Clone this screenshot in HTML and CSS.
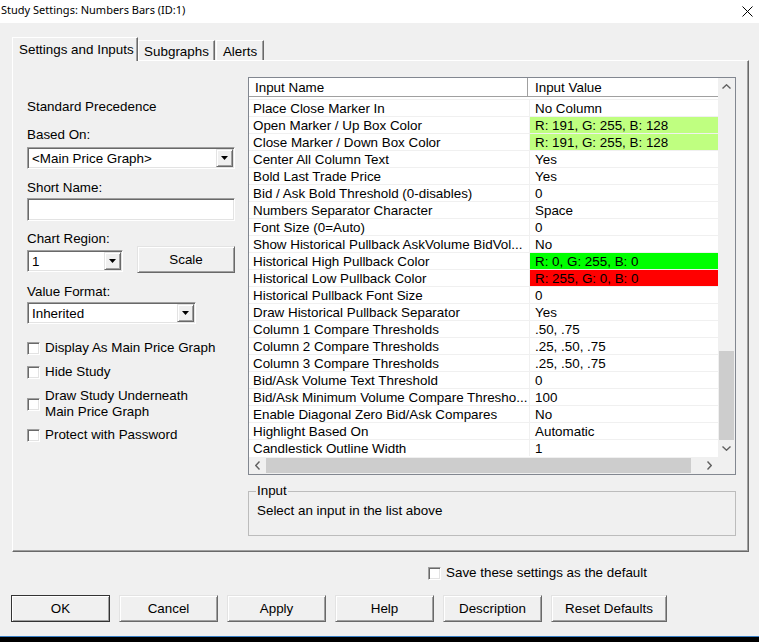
FILE: index.html
```html
<!DOCTYPE html>
<html>
<head>
<meta charset="utf-8">
<title>Study Settings: Numbers Bars (ID:1)</title>
<link rel="stylesheet" href="styles.css">
</head>
<body>
<div class="window">
  <div class="titlebar">
    <span class="title">Study Settings: Numbers Bars (ID:1)</span>
    <svg class="close" viewBox="0 0 11 11" width="11" height="11"><path d="M0.5 0.5L10.5 10.5M10.5 0.5L0.5 10.5" stroke="#000" stroke-width="1" fill="none"/></svg>
  </div>
  <div class="client">
    <div class="tabs">
      <div class="tab active">Settings and Inputs</div>
      <div class="tab t-sub">Subgraphs</div>
      <div class="tab t-alerts">Alerts</div>
    </div>
    <div class="panel">
      <div class="left">
        <div class="lbl">Standard Precedence</div>
        <div class="lbl m12">Based On:</div>
        <div class="combo w-based m5"><span class="ctext">&lt;Main Price Graph&gt;</span><span class="cbtn"><svg width="7" height="4" viewBox="0 0 7 4"><path d="M0 0H7L3.5 4Z" fill="#000"/></svg></span></div>
        <div class="lbl m10">Short Name:</div>
        <div class="edit m3"></div>
        <div class="lbl m9">Chart Region:</div>
        <div class="region-row">
          <div class="combo w-region"><span class="ctext">1</span><span class="cbtn"><svg width="7" height="4" viewBox="0 0 7 4"><path d="M0 0H7L3.5 4Z" fill="#000"/></svg></span></div>
          <div class="btn scale">Scale</div>
        </div>
        <div class="lbl m10">Value Format:</div>
        <div class="combo w-format m3"><span class="ctext">Inherited</span><span class="cbtn"><svg width="7" height="4" viewBox="0 0 7 4"><path d="M0 0H7L3.5 4Z" fill="#000"/></svg></span></div>
        <div class="checks">
          <div class="check"><span class="cbox"></span><span>Display As Main Price Graph</span></div>
          <div class="check"><span class="cbox"></span><span>Hide Study</span></div>
          <div class="check"><span class="cbox"></span><span>Draw Study Underneath<br>Main Price Graph</span></div>
          <div class="check"><span class="cbox"></span><span>Protect with Password</span></div>
        </div>
      </div>
      <div class="right">
        <div class="list">
          <div class="table">
            <div class="thead">
              <div class="th name">Input Name</div>
              <div class="th value">Input Value</div>
            </div>
            <div class="row"><div class="c name">Place Close Marker In</div><div class="c value">No Column</div></div>
            <div class="row"><div class="c name">Open Marker / Up Box Color</div><div class="c value lime">R: 191, G: 255, B: 128</div></div>
            <div class="row"><div class="c name">Close Marker / Down Box Color</div><div class="c value lime">R: 191, G: 255, B: 128</div></div>
            <div class="row"><div class="c name">Center All Column Text</div><div class="c value">Yes</div></div>
            <div class="row"><div class="c name">Bold Last Trade Price</div><div class="c value">Yes</div></div>
            <div class="row"><div class="c name">Bid / Ask Bold Threshold (0-disables)</div><div class="c value">0</div></div>
            <div class="row"><div class="c name">Numbers Separator Character</div><div class="c value">Space</div></div>
            <div class="row"><div class="c name">Font Size (0=Auto)</div><div class="c value">0</div></div>
            <div class="row"><div class="c name">Show Historical Pullback AskVolume BidVol...</div><div class="c value">No</div></div>
            <div class="row"><div class="c name">Historical High Pullback Color</div><div class="c value green">R: 0, G: 255, B: 0</div></div>
            <div class="row"><div class="c name">Historical Low Pullback Color</div><div class="c value red">R: 255, G: 0, B: 0</div></div>
            <div class="row"><div class="c name">Historical Pullback Font Size</div><div class="c value">0</div></div>
            <div class="row"><div class="c name">Draw Historical Pullback Separator</div><div class="c value">Yes</div></div>
            <div class="row"><div class="c name">Column 1 Compare Thresholds</div><div class="c value">.50, .75</div></div>
            <div class="row"><div class="c name">Column 2 Compare Thresholds</div><div class="c value">.25, .50, .75</div></div>
            <div class="row"><div class="c name">Column 3 Compare Thresholds</div><div class="c value">.25, .50, .75</div></div>
            <div class="row"><div class="c name">Bid/Ask Volume Text Threshold</div><div class="c value">0</div></div>
            <div class="row"><div class="c name">Bid/Ask Minimum Volume Compare Thresho...</div><div class="c value">100</div></div>
            <div class="row"><div class="c name">Enable Diagonal Zero Bid/Ask Compares</div><div class="c value">No</div></div>
            <div class="row"><div class="c name">Highlight Based On</div><div class="c value">Automatic</div></div>
            <div class="row"><div class="c name">Candlestick Outline Width</div><div class="c value">1</div></div>
          </div>
          <div class="vscroll">
            <div class="sbtn"><svg width="9" height="5" viewBox="0 0 9 5"><path d="M0.5 4.5L4.5 0.8L8.5 4.5" stroke="#606060" stroke-width="1.4" fill="none"/></svg></div>
            <div class="vtrack"></div>
            <div class="vthumb"></div>
            <div class="sbtn"><svg width="9" height="5" viewBox="0 0 9 5"><path d="M0.5 0.5L4.5 4.2L8.5 0.5" stroke="#606060" stroke-width="1.4" fill="none"/></svg></div>
          </div>
          <div class="hscroll">
            <div class="sbtn"><svg width="5" height="9" viewBox="0 0 5 9"><path d="M4.5 0.5L0.8 4.5L4.5 8.5" stroke="#606060" stroke-width="1.4" fill="none"/></svg></div>
            <div class="hthumb"></div>
            <div class="htrack"></div>
            <div class="sbtn"><svg width="5" height="9" viewBox="0 0 5 9"><path d="M0.5 0.5L4.2 4.5L0.5 8.5" stroke="#606060" stroke-width="1.4" fill="none"/></svg></div>
          </div>
          <div class="corner"></div>
        </div>
        <fieldset class="group">
          <legend>Input</legend>
          <div class="gtext">Select an input in the list above</div>
        </fieldset>
      </div>
    </div>
    <div class="save"><span class="cbox"></span><span>Save these settings as the default</span></div>
    <div class="buttons">
      <div class="btn dlg default">OK</div>
      <div class="btn dlg">Cancel</div>
      <div class="btn dlg">Apply</div>
      <div class="btn dlg">Help</div>
      <div class="btn dlg">Description</div>
      <div class="btn dlg reset">Reset Defaults</div>
    </div>
  </div>
</div>
</body>
</html>
```
FILE: styles.css
```css
* { box-sizing: border-box; }
html, body { margin: 0; padding: 0; }
body {
  width: 759px;
  height: 642px;
  overflow: hidden;
  background: #000;
  font-family: "Liberation Sans", Arial, sans-serif;
  font-size: 13.4px;
  color: #000;
}
.window { display: flex; flex-direction: column; height: 642px; }

.titlebar {
  height: 23px;
  background: #fff;
  display: flex;
  align-items: flex-start;
  justify-content: space-between;
  padding: 0 6px 0 1px;
}
.title {
  font-family: "Noto Sans", "Liberation Sans", sans-serif;
  font-size: 11px;
  line-height: 20px;
  color: #000;
}
.close { display: block; margin-top: 6px; }

.client {
  height: 614px;
  background: #f0f0f0;
  border-bottom: 1px solid #3a7fc4;
}

.tabs {
  display: flex;
  align-items: flex-end;
  height: 23px;
  margin-top: 14px;
  padding-left: 12px;
  position: relative;
  z-index: 1;
}
.tab {
  height: 20px;
  line-height: 21px;
  background: #f0f0f0;
  border-top: 1px solid #fff;
  border-left: 1px solid #fff;
  border-right: 1px solid #696969;
  box-shadow: inset -1px 0 #a0a0a0;
  text-align: center;
  white-space: nowrap;
}
.tab.active {
  width: 126px;
  height: 24px;
  line-height: 24px;
  margin-bottom: -1px;
  text-align: left;
  padding-left: 6px;
}
.t-sub { width: 77px; }
.t-alerts { width: 48px; margin-left: 1px; }

.panel {
  margin-left: 12px;
  width: 737px;
  height: 492px;
  border: 1px solid;
  border-color: #fff #696969 #696969 #fff;
  box-shadow: inset -1px -1px #a0a0a0;
  display: flex;
}

.left {
  width: 222px;
  padding-left: 14px;
  padding-top: 37px;
  display: flex;
  flex-direction: column;
  align-items: flex-start;
}
.lbl { height: 16px; line-height: 18px; white-space: nowrap; }
.m3 { margin-top: 3px; }
.m5 { margin-top: 5px; }
.m9 { margin-top: 9px; }
.m10 { margin-top: 10px; }
.m12 { margin-top: 12px; }

.combo, .edit {
  height: 22px;
  background: #fff;
  border: 1px solid;
  border-color: #a0a0a0 #fff #fff #a0a0a0;
  box-shadow: inset 1px 1px #696969, inset -1px -1px #e3e3e3;
  display: flex;
  align-items: center;
  justify-content: space-between;
}
.edit { width: 208px; height: 23px; }
.w-based { width: 208px; }
.w-region { width: 96px; margin-top: 4px; }
.w-format { width: 169px; }
.ctext { padding-left: 4px; white-space: nowrap; }
.cbtn {
  width: 17px;
  height: 18px;
  margin-right: 1px;
  background: #f0f0f0;
  border: 1px solid;
  border-color: #e3e3e3 #696969 #696969 #e3e3e3;
  box-shadow: inset 1px 1px #fff, inset -1px -1px #a0a0a0;
  display: flex;
  align-items: center;
  justify-content: center;
}

.region-row { display: flex; align-items: flex-start; height: 27px; }
.btn {
  background: #f0f0f0;
  border: 1px solid;
  border-color: #e3e3e3 #696969 #696969 #e3e3e3;
  box-shadow: inset 1px 1px #fff, inset -1px -1px #a0a0a0;
  display: flex;
  align-items: center;
  justify-content: center;
  white-space: nowrap;
}
.scale { width: 98px; height: 27px; margin-left: 14px; }

.checks {
  margin-top: 16px;
  display: flex;
  flex-direction: column;
  gap: 8px;
}
.check { display: flex; align-items: center; line-height: 16px; }
.check:last-child { margin-top: -1px; }
.cbox {
  width: 13px;
  height: 13px;
  flex: none;
  margin-right: 5px;
  background: #fff;
  border: 1px solid;
  border-color: #a0a0a0 #fff #fff #a0a0a0;
  box-shadow: inset 1px 1px #696969, inset -1px -1px #e3e3e3;
}

.right {
  margin-left: 13px;
  padding-top: 16px;
  display: flex;
  flex-direction: column;
}
.list {
  width: 488px;
  height: 398px;
  border: 1px solid #828790;
  background: #fff;
  display: grid;
  grid-template-columns: 469px 17px;
  grid-template-rows: 379px 17px;
}
.table { overflow: hidden; }
.thead {
  display: flex;
  height: 19px;
  border-bottom: 1px solid #a0a0a0;
  margin-bottom: 2px;
  background: #fff;
}
.th { height: 18px; line-height: 20px; white-space: nowrap; }
.th.name { width: 279px; padding-left: 6px; border-right: 1px solid #a0a0a0; }
.th.value { padding-left: 7px; }

.row {
  display: flex;
  height: 17px;
  border-top: 1px solid #f0f0f0;
}
.c { height: 16px; line-height: 18px; white-space: nowrap; }
.c.name { width: 281px; padding-left: 4px; border-right: 1px solid #f0f0f0; overflow: hidden; }
.c.value { width: 188px; padding-left: 5px; }
.lime { background: #bfff80; }
.green { background: #00ff00; }
.red { background: #ff0000; }

.vscroll {
  background: #f0f0f0;
  display: flex;
  flex-direction: column;
}
.sbtn {
  width: 17px;
  height: 17px;
  flex: none;
  display: flex;
  align-items: center;
  justify-content: center;
}
.vtrack { height: 256px; }
.vthumb { height: 89px; margin: 0 1px; background: #cdcdcd; }
.hscroll {
  background: #f0f0f0;
  display: flex;
}
.hthumb { width: 425px; margin: 1px 0; background: #cdcdcd; }
.htrack { flex: 1; }
.corner { background: #f0f0f0; }

.group {
  margin: 8px 0 0 0;
  width: 488px;
  min-width: 0;
  border: 1px solid #bcbcbc;
  padding: 4px 0 16px 8px;
}
.group legend {
  padding: 0 1px;
  margin-left: -1px;
  line-height: 16px;
}
.gtext { line-height: 16px; }

.save {
  margin-top: 13px;
  padding-left: 428px;
  display: flex;
  align-items: center;
  line-height: 18px;
  height: 16px;
}
.save .cbox { margin-right: 5px; }

.buttons {
  margin-top: 14px;
  padding-left: 11px;
  display: flex;
  gap: 9px;
}
.dlg { width: 99px; height: 27px; }
.dlg.reset { width: 116px; }
.dlg.default {
  border-color: #333;
  box-shadow: inset 1px 1px #fff, inset -1px -1px #a0a0a0;
}
```
